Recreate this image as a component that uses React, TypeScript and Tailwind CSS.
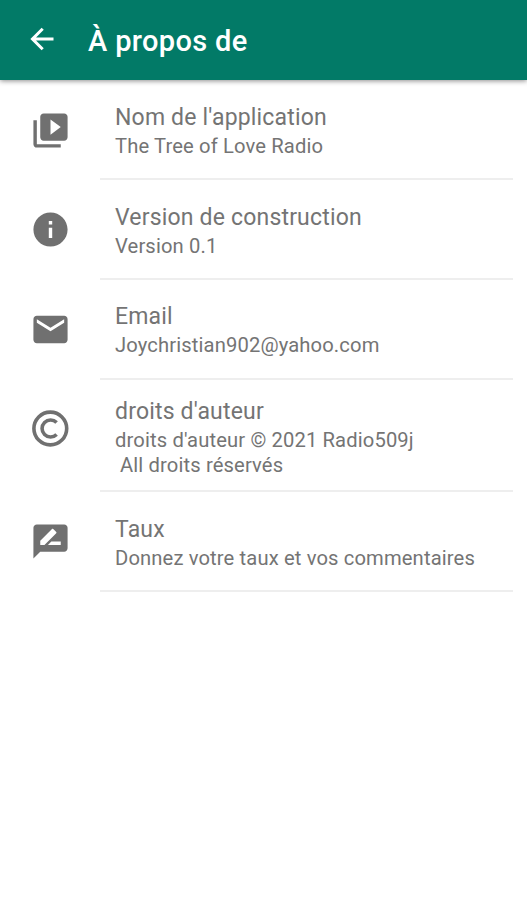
import type { ReactNode } from "react";
import { MdVideoLibrary, MdInfo, MdEmail, MdRateReview } from "react-icons/md";

function BackIcon() {
  return (
    <svg
      width="24"
      height="24"
      viewBox="0 0 24 24"
      fill="none"
      stroke="currentColor"
      strokeWidth="3"
      className="mb-[2px] ml-[30px]"
    >
      <path d="M23.5 12H2.5M12.7 1.8 2.5 12l10.2 10.2" />
    </svg>
  );
}

function CopyrightIcon() {
  return (
    <svg width="38" height="38" viewBox="0 0 38 38" fill="none" stroke="currentColor" strokeWidth="3.6">
      <circle cx="19.3" cy="18.5" r="16.4" />
      <path d="M25.6 12.5A8.5 8.5 0 1 0 25.6 24.5" />
    </svg>
  );
}

type RowProps = {
  icon: ReactNode;
  title: string;
  padding?: string;
  tall?: boolean;
  children: ReactNode;
};

function Row({ icon, title, padding = "pt-[23px]", tall = false, children }: RowProps) {
  return (
    <li className={tall ? "flex h-[112px]" : "flex h-[100px]"}>
      <div className="flex h-[98px] w-[100px] shrink-0 items-center justify-center text-[#707070]">
        {icon}
      </div>
      <div
        className={`mr-[14px] flex-1 border-b-2 border-[#eeeeee] pl-[15px] whitespace-nowrap text-[#747474] ${padding}`}
      >
        <h2 className="text-[23px] leading-[29px] tracking-[0.18px]">{title}</h2>
        {children}
      </div>
    </li>
  );
}

function Detail({ children }: { children: ReactNode }) {
  return <p className="text-[20.2px] leading-[29px] tracking-[0.13px]">{children}</p>;
}

export default function App() {
  return (
    <div className="h-[900px] w-[527px] overflow-hidden bg-white font-['Roboto',sans-serif]">
      <header className="flex h-20 items-center bg-[#027a67] text-white shadow-[0_1px_5px_rgba(0,0,0,0.45)]">
        <BackIcon />
        <h1 className="mt-[4px] ml-[34px] text-[29px] font-medium tracking-[0.35px]">À propos de</h1>
      </header>
      <ul>
        <Row icon={<MdVideoLibrary size={41} className="mt-[2px]" />} title="Nom de l'application">
          <Detail>The Tree of Love Radio</Detail>
        </Row>
        <Row icon={<MdInfo size={41} />} title="Version de construction">
          <Detail>Version 0.1</Detail>
        </Row>
        <Row icon={<MdEmail size={41} />} title="Email" padding="pt-[22px]">
          <Detail>Joychristian902@yahoo.com</Detail>
        </Row>
        <Row icon={<CopyrightIcon />} title="droits d'auteur" padding="pt-[17px]" tall>
          <p className="pt-[2px] text-[20.2px] leading-[25px] tracking-[0.13px]">
            droits d'auteur © 2021 Radio509j
          </p>
          <p className="pl-[5px] text-[20.2px] leading-[24px] tracking-[0.13px]">All droits réservés</p>
        </Row>
        <Row icon={<MdRateReview size={41} />} title="Taux">
          <Detail>Donnez votre taux et vos commentaires</Detail>
        </Row>
      </ul>
    </div>
  );
}
